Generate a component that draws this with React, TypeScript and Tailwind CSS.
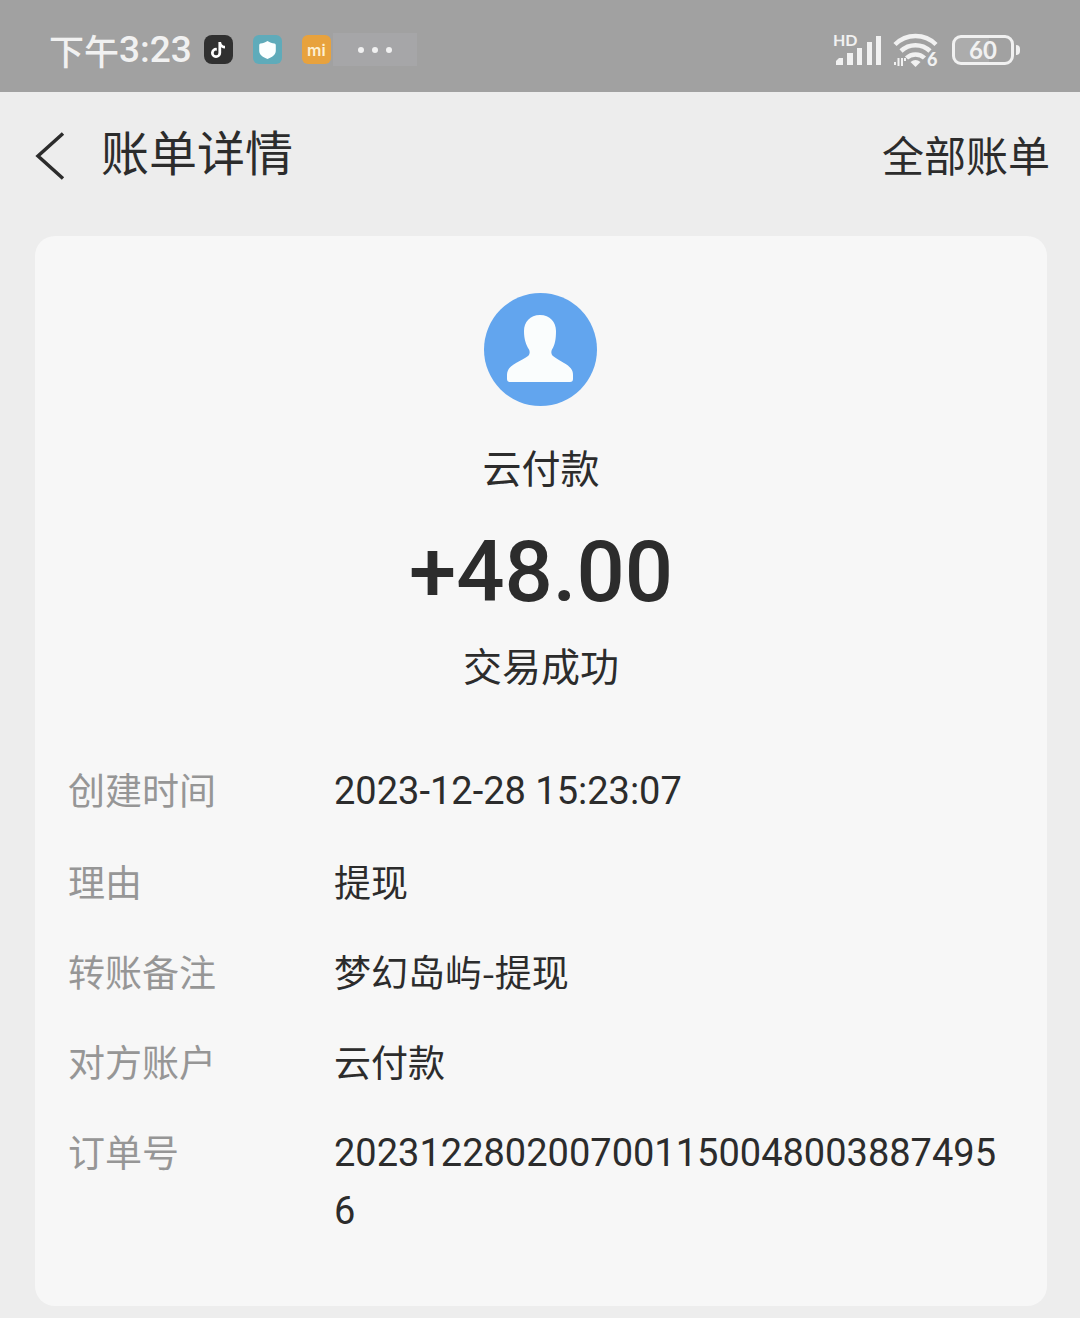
import { FaTiktok } from "react-icons/fa6";

interface IBillRow {
  label: string;
  value: string;
  numeric?: boolean;
}

const rows: IBillRow[] = [
  { label: "创建时间", value: "2023-12-28 15:23:07", numeric: true },
  { label: "理由", value: "提现" },
  { label: "转账备注", value: "梦幻岛屿-提现" },
  { label: "对方账户", value: "云付款" },
  { label: "订单号", value: "20231228020070011500480038874956", numeric: true },
];

const SignalIcon = () => (
  <svg width="50" height="40" viewBox="0 0 50 40" fill="#f1f1f1">
    <text x="0" y="16" fontSize="16" fontWeight="700" fontFamily="Lato, sans-serif">
      HD
    </text>
    <path d="M3 35v-4l3-3h4v7z" />
    <rect x="14" y="23" width="6" height="12" />
    <rect x="24" y="18" width="5" height="17" />
    <rect x="34" y="12" width="5" height="23" />
    <rect x="43" y="6" width="5" height="29" />
  </svg>
);

const WifiIcon = () => (
  <svg width="48" height="40" viewBox="0 0 48 40" fill="none" stroke="#f1f1f1">
    <path d="M2 14.500a29 29 0 0 1 41 0" strokeWidth="4.500" />
    <path d="M8 21a21 21 0 0 1 29 0" strokeWidth="4.500" />
    <path d="M13.500 28a13 13 0 0 1 18 0" strokeWidth="4.500" />
    <path d="M17.500 32q5-4 10 0l-5 5z" fill="#f1f1f1" stroke="none" />
    <path d="M2 32v3M5.500 28v8M9 36v-8M12 28v3" strokeWidth="2" />
    <text
      x="34"
      y="36"
      fontSize="18"
      fontWeight="900"
      fontFamily="Lato, sans-serif"
      fill="#f1f1f1"
      stroke="none"
    >
      6
    </text>
  </svg>
);

const StatusBar = () => (
  <div className="flex h-[92px] items-center justify-between bg-[#a1a1a1] pt-[7px] pr-[60px] pl-[49px] text-[#f1f1f1]">
    <div className="flex items-center">
      <span className="font-['Noto_Sans_CJK_SC',sans-serif] text-[35px] leading-[40px] font-medium">下午</span>
      <span className="font-['Roboto',sans-serif] text-[37px] leading-[40px] font-medium">3:23</span>
      <div className="ml-3 flex size-[29px] items-center justify-center rounded-lg bg-[#303030]">
        <FaTiktok className="size-4 text-white" />
      </div>
      <div className="ml-5 flex size-[29px] items-center justify-center rounded-md bg-[#5fabba]">
        <svg width="19" height="20" viewBox="0 0 19 20" fill="#fbffff">
          <path d="M9.500 1c2.500 1.800 4.500 2.200 7 2.600q1.300.3 1.300 1.600v5.500c0 4-3.800 6.500-8.300 8.300c-4.500-1.800-8.300-4.300-8.300-8.300v-5.500q0-1.300 1.300-1.600c2.500-.4 4.500-.8 7-2.600z" />
        </svg>
      </div>
      <div className="ml-5 flex size-[29px] items-center justify-center rounded-md bg-[#e8a23d]">
        <span className="font-['Inter',sans-serif] text-base leading-5 font-semibold text-[#fdf0d2]">mi</span>
      </div>
      <div className="ml-[2px] flex h-[33px] w-[84px] items-center justify-center gap-2 bg-[#a6a6a8]">
        <span className="size-[6px] rounded-full bg-[#f1f1f1]" />
        <span className="size-[6px] rounded-full bg-[#f1f1f1]" />
        <span className="size-[6px] rounded-full bg-[#f1f1f1]" />
      </div>
    </div>
    <div className="flex items-center">
      <SignalIcon />
      <span className="ml-[10px]">
        <WifiIcon />
      </span>
      <div className="ml-[11px] flex items-center gap-[2px]">
        <div className="flex h-[30px] w-[62px] items-center justify-center rounded-[9px] border-3 border-[#f1f1f1] bg-[linear-gradient(to_right,#acacac_60%,#a1a1a1_60%)]">
          <span className="font-['Lato',sans-serif] text-2xl leading-6 font-bold">60</span>
        </div>
        <span className="h-[10px] w-1 rounded-r-sm bg-[#f1f1f1]" />
      </div>
    </div>
  </div>
);

export default function App() {
  return (
    <div className="min-h-screen w-full bg-[#ededed] pb-3 font-['Noto_Sans_CJK_SC',sans-serif] text-[#2c2c2c]">
      <StatusBar />

      <header className="flex h-36 items-start justify-between pt-[26px] pr-[30px] pl-[35px]">
        <div className="flex items-center">
          <button type="button" aria-label="返回" className="mt-3">
            <svg width="30" height="48" viewBox="0 0 30 48" fill="none" stroke="#2c2c2c" strokeWidth="3.500">
              <path d="M28 1.500L3 24L28 46.500" />
            </svg>
          </button>
          <h1 className="ml-9 text-[48px] leading-[64px]">账单详情</h1>
        </div>
        <a href="#bills" className="pt-1 text-[42px] leading-[64px]">
          全部账单
        </a>
      </header>

      <main className="mr-[33px] ml-[35px] rounded-[20px] bg-[#f7f7f7] px-[33px] pt-[57px] pb-[66px]">
        <div className="flex flex-col items-center">
          <svg width="114" height="113" viewBox="0 0 114 113">
            <circle cx="56.500" cy="56.500" r="56.500" fill="#62a5ee" />
            <path
              d="M56 22c-10 0-16 7-16 16c0 8 2 14 5 18.500c1 2 1 4.500-1 6.500c-3 2.500-8 4.500-12 7c-6 3.500-9 6.500-9 12v4c0 2 1 3 3 3h60c2 0 3-1 3-3v-4c0-5.500-3-8.500-9-12c-4-2.500-8-4.500-11-7c-2-2-2-4.500-1-6.500c3-4.500 4-10.500 4-18.500c0-9-6-16-16-16z"
              fill="#fafdfd"
            />
          </svg>
          <p className="mt-[30px] text-[39px] leading-[60px]">云付款</p>
          <p className="mt-10 font-['Roboto',sans-serif] text-[85px] leading-[72px] font-medium">+48.00</p>
          <p className="mt-[26px] text-[39px] leading-[60px]">交易成功</p>
        </div>

        <dl className="mt-[66px] flex flex-col gap-8">
          {rows.map((row) => (
            <div key={row.label} className="flex leading-[58px]">
              <dt className="w-[266px] shrink-0 text-[37px] text-[#969696]">{row.label}</dt>
              <dd
                className={
                  row.numeric
                    ? "min-w-0 flex-1 pt-[2px] font-['Roboto',sans-serif] text-[38px] break-all"
                    : "min-w-0 flex-1 text-[37px]"
                }
              >
                {row.value}
              </dd>
            </div>
          ))}
        </dl>
      </main>
    </div>
  );
}
